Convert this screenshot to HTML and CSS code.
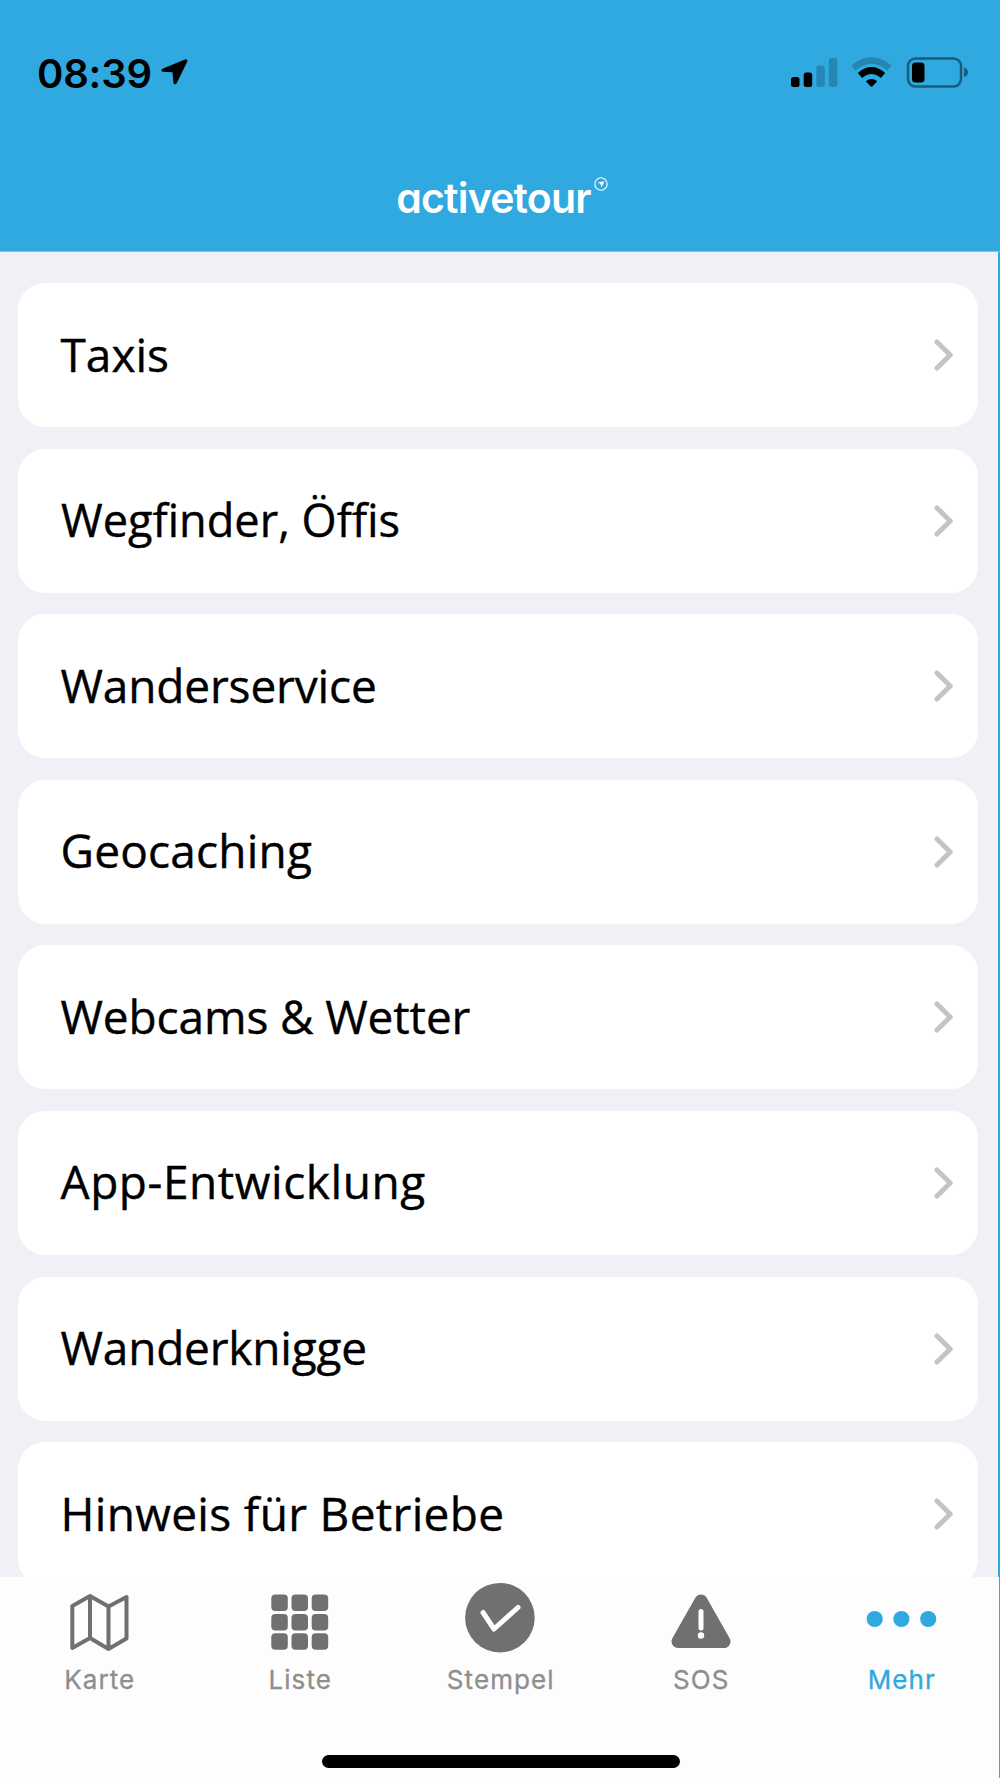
FILE: index.html
```html
<!DOCTYPE html>
<html lang="de">
<head>
<meta charset="utf-8">
<title>activetour</title>
<link rel="stylesheet" href="styles.css">
</head>
<body>
<div class="app">
  <header class="header">
    <div class="status">
      <span class="time">08:39</span>
      <svg class="locate" width="28" height="28" viewBox="0 0 28 28"><path d="M25.500 1.200 2.500 10.800Q.200 12.400 2.500 13.800L12.500 14.300 13.500 25Q14.500 27.600 16.700 25.300L27.300 3.500Q27.700 1.200 25.500 1.200Z"/></svg>
      <svg class="signals" width="180" height="32" viewBox="0 0 180 32">
        <rect x="1" y="20" width="8.500" height="10" rx="2.500"/>
        <rect x="13.700" y="15.500" width="8.500" height="14.500" rx="2.500"/>
        <rect class="faint" x="26.300" y="8.500" width="8.500" height="21.500" rx="2.500"/>
        <rect class="faint" x="38.800" y="1" width="8.500" height="29" rx="2.500"/>
        <path class="faint-line" d="M63.500 11Q81.500-4 99.500 11"/>
        <path class="wifi-line" d="M70 18.500Q81.500 8.500 93 18.500"/>
        <path d="M75.800 24.300q5.700-4.800 11.400 0l-5 5.200q-.7.700-1.400 0Z"/>
        <rect class="battery" x="118" y="1.500" width="53" height="28" rx="7.500"/>
        <rect x="122" y="5.500" width="12.500" height="20" rx="3.500"/>
        <path class="tip" d="M174 10.500q4 1.500 4 4.800t-4 4.800Z"/>
      </svg>
    </div>
    <div class="brand">
      <span class="wordmark">activetour</span>
      <svg class="badge" width="14" height="14" viewBox="0 0 14 14"><circle cx="7" cy="7" r="6.200"/><path d="M3.500 5.500 10.500 4.200 7.300 10.500 6.700 7Z"/></svg>
    </div>
  </header>
  <main class="list">
    <a class="card"><span>Taxis</span><svg class="chevron" viewBox="0 0 20 32"><path d="M3 3 16.200 16 3 29"/></svg></a>
    <a class="card"><span class="transit">Wegfinder, Öffis</span><svg class="chevron" viewBox="0 0 20 32"><path d="M3 3 16.200 16 3 29"/></svg></a>
    <a class="card"><span class="service">Wanderservice</span><svg class="chevron" viewBox="0 0 20 32"><path d="M3 3 16.200 16 3 29"/></svg></a>
    <a class="card"><span class="geo">Geocaching</span><svg class="chevron" viewBox="0 0 20 32"><path d="M3 3 16.200 16 3 29"/></svg></a>
    <a class="card"><span class="weather">Webcams &amp; Wetter</span><svg class="chevron" viewBox="0 0 20 32"><path d="M3 3 16.200 16 3 29"/></svg></a>
    <a class="card"><span class="dev">App-Entwicklung</span><svg class="chevron" viewBox="0 0 20 32"><path d="M3 3 16.200 16 3 29"/></svg></a>
    <a class="card"><span class="etiquette">Wanderknigge</span><svg class="chevron" viewBox="0 0 20 32"><path d="M3 3 16.200 16 3 29"/></svg></a>
    <a class="card"><span class="business">Hinweis für Betriebe</span><svg class="chevron" viewBox="0 0 20 32"><path d="M3 3 16.200 16 3 29"/></svg></a>
  </main>
  <footer class="footer">
    <nav class="tabs">
      <a class="tab"><svg width="72" height="72" viewBox="0 0 72 72"><path class="map" d="M8.300 25 26 15 44.500 25.500 62.500 16V57.500L44.500 68 26 57 8.300 67ZM26 15V57M44.500 25.500V68"/></svg><span>Karte</span></a>
      <a class="tab"><svg width="72" height="72" viewBox="0 0 72 72"><g><rect x="7.300" y="13.500" width="16.500" height="16.500" rx="4"/><rect x="27.500" y="13.500" width="16.500" height="16.500" rx="4"/><rect x="47.700" y="13.500" width="16.500" height="16.500" rx="4"/><rect x="7.300" y="33" width="16.500" height="16.500" rx="4"/><rect x="27.500" y="33" width="16.500" height="16.500" rx="4"/><rect x="47.700" y="33" width="16.500" height="16.500" rx="4"/><rect x="7.300" y="52.200" width="16.500" height="16.500" rx="4"/><rect x="27.500" y="52.200" width="16.500" height="16.500" rx="4"/><rect x="47.700" y="52.200" width="16.500" height="16.500" rx="4"/></g></svg><span>Liste</span></a>
      <a class="tab"><svg width="72" height="72" viewBox="0 0 72 72"><circle cx="34.900" cy="36.700" r="34.800"/><path class="check" d="M18 31.500 29 48 53 26.500"/></svg><span>Stempel</span></a>
      <a class="tab"><svg width="72" height="72" viewBox="0 0 72 72"><path class="warning" d="M36 20 59 60.500H13Z"/><path class="mark" d="M36 30.500V47"/><circle class="dot" cx="36" cy="54.500" r="3.200"/></svg><span>SOS</span></a>
      <a class="tab active"><svg width="72" height="72" viewBox="0 0 72 72"><circle cx="8.700" cy="38" r="8.100"/><circle cx="35.400" cy="38" r="8.100"/><circle cx="62.200" cy="38" r="8.100"/></svg><span>Mehr</span></a>
    </nav>
    <div class="home"></div>
  </footer>
</div>
</body>
</html>
```
FILE: styles.css
```css
* { box-sizing: border-box; }
body { margin: 0; background: #30a8e0; }
.app { width: 1000px; height: 1778px; display: flex; flex-direction: column; overflow: hidden; }
.header { height: 252px; flex: none; background: #30a8e0; border-bottom: 1px solid #9db8c8; }
.status { display: flex; align-items: flex-start; padding: 57px 30px 0 37px; height: 160px; }
.time { font: 600 40px/33px Inter, sans-serif; letter-spacing: -.2px; width: 123px; white-space: nowrap; }
.locate { margin-top: 1px; }
.signals { margin-left: auto; }
.faint { opacity: .2; }
.faint-line, .wifi-line { fill: none; stroke: #000; stroke-width: 6.500; }
.faint-line { opacity: .2; }
.battery { fill: none; stroke: #000; stroke-width: 2.500; opacity: .45; }
.tip { opacity: .45; }
.brand { display: flex; justify-content: center; padding: 17px 0 0 4px; gap: 3px; color: #fff; }
.wordmark { font: 600 41px/43px Inter, sans-serif; letter-spacing: -.8px; font-feature-settings: "cv11"; }
.badge { fill: #fff; }
.badge circle { fill: none; stroke: #fff; stroke-width: 1.100; }
.list { height: 1325px; width: 998px; overflow: hidden; background: #f1f0f6; padding: 31px 20px 0 17.500px; display: flex; flex-direction: column; gap: 21.600px; }
.card { flex: none; height: 144px; border-radius: 27px; background: #fff; display: flex; align-items: center; justify-content: space-between; padding: 0 24.500px 0 43px; }
.card span { font: 400 46px/60px "Open Sans", sans-serif; color: #000; white-space: nowrap; margin-top: -3px; -webkit-text-stroke: .4px #000; transform-origin: 0 50%; }
.card .transit { transform: scaleX(.981); }
.card .service { letter-spacing: -.150px; }
.card .geo { letter-spacing: .200px; }
.card .weather { letter-spacing: -.120px; }
.card .dev { letter-spacing: .570px; }
.card .etiquette { letter-spacing: -.200px; }
.card .business { letter-spacing: .330px; }
.chevron { width: 20px; height: 32px; fill: none; stroke: #c4c4c6; stroke-width: 5; stroke-linecap: round; stroke-linejoin: round; }
.footer { height: 201px; width: 999px; background: #fdfdfd; }
.tabs { display: grid; grid-template-columns: repeat(5, 200.500px); margin-left: -.500px; padding-top: 4px; }
.tab { display: flex; flex-direction: column; align-items: center; fill: #707070; color: #8e8e8e; }
.tab span { font: 400 26px/34px Inter, sans-serif; letter-spacing: 1.100px; margin-top: 9.500px; -webkit-text-stroke: .3px currentColor; }
.tab.active { fill: #30a8e0; color: #30a8e0; }
.map { fill: none; stroke: #707070; stroke-width: 4; stroke-linejoin: round; }
.check, .mark { fill: none; stroke: #fff; stroke-width: 5; stroke-linecap: round; stroke-linejoin: round; }
.warning { stroke: #707070; stroke-width: 13; stroke-linejoin: round; }
.dot { fill: #fff; }
.home { width: 358px; height: 13px; border-radius: 7px; background: #000; margin: 58.500px 0 0 322px; }
```
